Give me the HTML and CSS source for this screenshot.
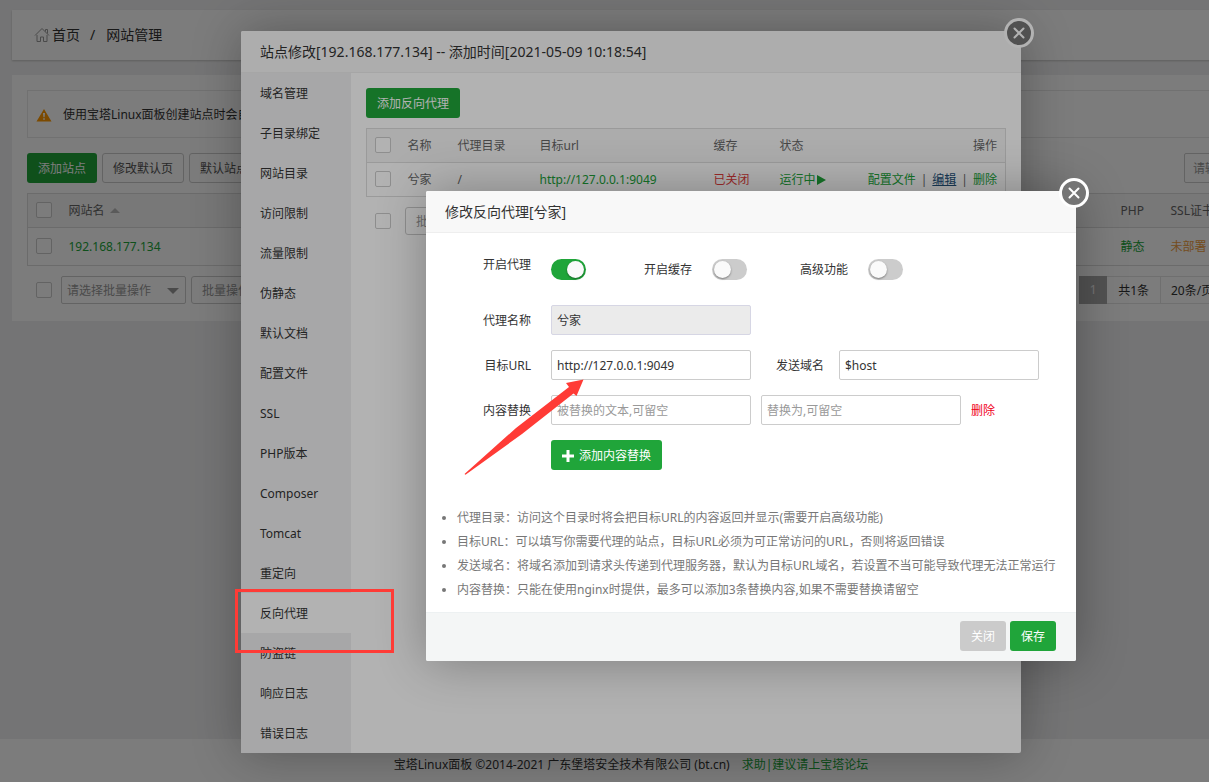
FILE: index.html
```html
<!DOCTYPE html>
<html lang="zh-CN">
<head>
<meta charset="utf-8">
<title>网站管理</title>
<link rel="stylesheet" href="styles.css">
</head>
<body>
<div class="stage">
  <div class="page">
    <main class="main">
      <nav class="card crumbs">
        <svg class="home" viewBox="0 0 16 16" width="16" height="16" fill="none" stroke="#999" stroke-width="1"><path d="M1 8.500 8 1.500l7 7M11.500 4.500V2.500h2v4M3 8v6.500h3.500V10h3v4.500H13V8"/></svg>
        <a href="#">首页</a><span class="slash">/</span><span>网站管理</span>
      </nav>
      <section class="card sites">
        <div class="alert">
          <svg viewBox="0 0 16 14" width="16" height="14"><path d="M8 1 15.500 13.500H.5z" fill="#ff9900" stroke-linejoin="round"/><path d="M7 5h2l-.4 4.200H7.400zM7.200 10.200h1.600v1.600H7.200z" fill="#fff"/></svg>
          <span>使用宝塔Linux面板创建站点时会自动创建权限配置，统一使用www用户。</span>
        </div>
        <div class="toolbar">
          <button class="btn btn-green">添加站点</button>
          <button class="btn btn-plain">修改默认页</button>
          <button class="btn btn-plain">默认站点</button>
          <input class="search" type="text" placeholder="请输入域名" aria-label="搜索">
        </div>
        <table class="grid site-grid">
          <colgroup><col class="c-check"><col><col class="c-php"><col class="c-ssl"></colgroup>
          <thead><tr><th><input type="checkbox" aria-label="全选"></th><th>网站名<i class="sort"></i></th><th>PHP</th><th>SSL证书</th></tr></thead>
          <tbody><tr><td><input type="checkbox" aria-label="选择站点"></td><td><a href="#" class="green">192.168.177.134</a></td><td><a href="#" class="green">静态</a></td><td><a href="#" class="orange">未部署</a></td></tr></tbody>
        </table>
        <div class="batch">
          <input type="checkbox" aria-label="批量选择">
          <div class="picker"><select aria-label="批量操作"><option>请选择批量操作</option></select></div>
          <button class="btn btn-batch">批量操作</button>
          <div class="pager"><b>1</b><span>共1条</span><span class="size">20条/页</span></div>
        </div>
      </section>
    </main>
    <footer class="foot">宝塔Linux面板 ©2014-2021 广东堡塔安全技术有限公司 (bt.cn)<a href="#" class="green">求助|建议请上宝塔论坛</a></footer>
  </div>

  <div class="shade"></div>

  <section class="dialog site-dialog">
    <h2 class="dialog-title">站点修改[192.168.177.134] -- 添加时间[2021-05-09 10:18:54]</h2>
    <button class="close" aria-label="关闭窗口"><svg viewBox="0 0 12 12" width="12" height="12"><path d="M1.500 1.500l9 9M10.500 1.500l-9 9" stroke="#fff" stroke-width="2" stroke-linecap="round"/></svg></button>
    <div class="split">
      <nav class="menu">
        <a href="#">域名管理</a><a href="#">子目录绑定</a><a href="#">网站目录</a><a href="#">访问限制</a><a href="#">流量限制</a><a href="#">伪静态</a><a href="#">默认文档</a><a href="#">配置文件</a><a href="#">SSL</a><a href="#">PHP版本</a><a href="#">Composer</a><a href="#">Tomcat</a><a href="#">重定向</a><a href="#" class="on">反向代理</a><a href="#">防盗链</a><a href="#">响应日志</a><a href="#">错误日志</a>
      </nav>
      <div class="pane">
        <button class="btn btn-green">添加反向代理</button>
        <table class="grid proxy-grid">
          <colgroup><col class="c-check"><col class="c-name"><col class="c-dir"><col class="c-url"><col class="c-cache"><col></colgroup>
          <thead><tr><th><input type="checkbox" aria-label="全选"></th><th>名称</th><th>代理目录</th><th>目标url</th><th>缓存</th><th><div class="ends"><span>状态</span><span>操作</span></div></th></tr></thead>
          <tbody><tr><td><input type="checkbox" aria-label="选择代理"></td><td>兮家</td><td>/</td><td><a href="#" class="green">http://127.0.0.1:9049</a></td><td><a href="#" class="red">已关闭</a></td>
          <td><div class="ends"><a href="#" class="green run">运行中<i class="play"></i></a><span class="ops"><a href="#" class="green">配置文件</a><span>|</span><a href="#" class="edit">编辑</a><span>|</span><a href="#" class="green">删除</a></span></div></td></tr></tbody>
        </table>
        <div class="batch">
          <input type="checkbox" aria-label="批量选择">
          <button class="btn btn-batch">批量删除</button>
        </div>
      </div>
    </div>
  </section>

  <div class="shade"></div>

  <section class="dialog proxy-dialog">
    <h2 class="dialog-title">修改反向代理[兮家]</h2>
    <button class="close" aria-label="关闭窗口"><svg viewBox="0 0 12 12" width="12" height="12"><path d="M1.500 1.500l9 9M10.500 1.500l-9 9" stroke="#fff" stroke-width="2" stroke-linecap="round"/></svg></button>
    <form class="form">
      <div class="row switches">
        <label class="lab raised" for="s1">开启代理</label><input class="switch" id="s1" type="checkbox" checked>
        <label class="lab mid" for="s2">开启缓存</label><input class="switch" id="s2" type="checkbox">
        <label class="lab far" for="s3">高级功能</label><input class="switch" id="s3" type="checkbox">
      </div>
      <div class="row"><label class="lab" for="f1">代理名称</label><input class="text" id="f1" type="text" value="兮家" disabled></div>
      <div class="row"><label class="lab" for="f2">目标URL</label><input class="text" id="f2" type="text" value="http://127.0.0.1:9049"><label class="lab host" for="f3">发送域名</label><input class="text" id="f3" type="text" value="$host"></div>
      <div class="row"><label class="lab" for="f4">内容替换</label><input class="text" id="f4" type="text" placeholder="被替换的文本,可留空"><input class="text next" type="text" placeholder="替换为,可留空" aria-label="替换为"><a href="#" class="del">删除</a></div>
      <div class="row"><span class="lab"></span><button type="button" class="btn btn-green btn-add"><svg viewBox="0 0 12 12" width="12" height="12"><path d="M4.500 0h3v4.500H12v3H7.500V12h-3V7.500H0v-3h4.500z" fill="#fff"/></svg>添加内容替换</button></div>
      <ul class="tips">
        <li>代理目录：访问这个目录时将会把目标URL的内容返回并显示(需要开启高级功能)</li>
        <li>目标URL：可以填写你需要代理的站点，目标URL必须为可正常访问的URL，否则将返回错误</li>
        <li>发送域名：将域名添加到请求头传递到代理服务器，默认为目标URL域名，若设置不当可能导致代理无法正常运行</li>
        <li>内容替换：只能在使用nginx时提供，最多可以添加3条替换内容,如果不需要替换请留空</li>
      </ul>
      <div class="actions"><button type="button" class="btn btn-gray">关闭</button><button type="button" class="btn btn-green">保存</button></div>
    </form>
    <svg class="arrow" viewBox="0 0 120 96" width="120" height="96"><path d="M119.500 .5 102 4l3 4L52 49 .5 95l1 .8L58 55l51.500-40.500 3 2.500z" fill="#ff3b36"/></svg>
  </section>

  <div class="mark"></div>
</div>
</body>
</html>
```

FILE: styles.css
```css
* { box-sizing: border-box; }
body {
  margin: 0;
  overflow: hidden;
  font: 12px/18px "Noto Sans", "Noto Sans CJK SC", sans-serif;
  color: #333;
}
a { color: inherit; text-decoration: none; }
button, input, select { font: inherit; color: inherit; margin: 0; }
.stage { position: relative; width: calc(100% + 53px); height: 100vh; overflow: hidden; }
.page { display: flex; flex-direction: column; height: 100%; background: #f0f0f1; }
.main { flex: 1; padding: 10px 12px; }
.card { background: #fff; }
.crumbs {
  display: flex;
  align-items: center;
  height: 50px;
  padding-left: 22px;
  font-size: 14px;
  box-shadow: 0 1px 2px rgba(0, 0, 0, .2);
}
.home { margin-right: 2px; }
.slash { padding: 0 11px 0 10px; }
.sites { margin-top: 15px; padding: 15px 15px 17px; }
.alert {
  display: flex;
  align-items: center;
  gap: 11px;
  height: 48px;
  padding: 2px 0 0 8px;
  border: 1px solid #e8e8e8;
  white-space: nowrap;
}
.toolbar { display: flex; gap: 5px; margin: 15px 0 10px; }
.btn {
  height: 30px;
  padding: 2px 11px 0;
  border: 0;
  border-radius: 3px;
  white-space: nowrap;
}
.btn-green { background: #20a53a; color: #fff; }
.btn-gray { background: #cbcbcb; color: #fff; }
.btn-plain { padding: 2px 10px 0; background: #fff; border: 1px solid #ccc; color: #555; }
.btn-batch { height: 28px; padding: 2px 10px 0; background: #fff; border: 1px solid #ccc; color: #999; }
.search {
  width: 51px;
  height: 30px;
  margin-left: auto;
  padding: 0 8px;
  border: 1px solid #ccc;
  border-radius: 2px;
}
::placeholder { color: #999; opacity: 1; }
input[type="checkbox"] {
  appearance: none;
  display: block;
  width: 16px;
  height: 16px;
  border: 1px solid #ccc;
  border-radius: 2px;
  background: #fff;
}
.grid input[type="checkbox"] { margin-bottom: 2px; }
.grid {
  width: 100%;
  table-layout: fixed;
  border-collapse: collapse;
  border: 1px solid #ddd;
  color: #666;
}
.grid th, .grid td { height: 34px; padding: 0 8px; text-align: left; font-weight: normal; white-space: nowrap; border-bottom: 1px solid #ddd; }
.grid th { background: #f6f6f6; }
.site-grid td { height: 38px; }
.c-check { width: 33px; }
.c-php { width: 50px; }
.c-ssl { width: 72px; }
.c-name { width: 50px; }
.c-dir { width: 82px; }
.c-url { width: 174px; }
.c-cache { width: 66px; }
.sort {
  display: inline-block;
  margin: 0 0 2px 5px;
  border: 5px solid transparent;
  border-top: 0;
  border-bottom-color: #bbb;
}
.green { color: #20a53a; }
.orange { color: #f0a040; }
.red { color: #e03c3c; }
.batch { display: flex; align-items: center; margin-top: 10px; padding-left: 9px; }
.picker { position: relative; margin: 0 5px 0 9px; }
.picker select {
  appearance: none;
  display: block;
  width: 125px;
  height: 28px;
  padding: 2px 5px 0;
  border: 1px solid #ccc;
  border-radius: 2px;
  background: #fff;
  color: #999;
}
.picker::after {
  content: "";
  position: absolute;
  right: 7px;
  top: 12px;
  border: 6px solid transparent;
  border-top-color: #999;
  border-bottom: 0;
}
.pager { display: flex; margin-left: auto; line-height: 26px; }
.pager b { width: 28px; border: 1px solid #aaa; background: #aaa; color: #eee; font-weight: normal; text-align: center; }
.pager span { padding: 1px 11px 0; line-height: 25px; border: 1px solid #e6e6e6; border-left: 0; }
.pager .size { width: 74px; padding: 1px 10px 0; }
.foot {
  display: flex;
  justify-content: center;
  gap: 12px;
  padding: 17px 0 8px;
  background: #fff;
}
.shade { position: absolute; inset: 0; background: rgba(0, 0, 0, .3); }

.dialog {
  position: absolute;
  background: #fff;
  border-radius: 2px;
  box-shadow: 1px 1px 50px rgba(0, 0, 0, .3);
}
.site-dialog { left: calc(50% - 390px); top: 31px; width: 780px; }
.proxy-dialog { left: calc(50% - 205px); top: 191px; width: 650px; }
.dialog-title {
  height: 42px;
  margin: 0;
  padding-left: 19px;
  border-bottom: 1px solid #eee;
  border-radius: 2px 2px 0 0;
  background: #f8f8f8;
  font-size: 14px;
  font-weight: normal;
  line-height: 42px;
}
.close {
  position: absolute;
  top: -13px;
  right: -13px;
  display: flex;
  align-items: center;
  justify-content: center;
  width: 30px;
  height: 30px;
  padding: 0;
  border: 3px solid #fff;
  border-radius: 50%;
  background: #757575;
}
.split { display: flex; }
.menu { width: 110px; background: #f0f0f1; }
.menu a { display: block; height: 40px; padding-left: 19px; line-height: 42px; }
.menu .on { background: #fff; }
.pane { flex: 1; padding: 15px; }
.proxy-grid { margin-top: 10px; }
.pane .btn { display: block; }
.pane .btn-batch { margin-left: 14px; }
.ends { display: flex; justify-content: space-between; }
.run { display: flex; align-items: center; }
.play { margin-left: 1px; border: 5px solid transparent; border-left: 9px solid #20a53a; border-right: 0; }
.ops { display: flex; gap: 5px; }
.edit { color: #23527c; text-decoration: underline; }

.form { padding-top: 21px; }
.row { display: flex; align-items: center; height: 30px; margin-bottom: 15px; }
.switches { margin-bottom: 21px; }
.lab { width: 105px; margin-right: 20px; padding-top: 2px; text-align: right; }
.raised { align-self: flex-start; }
.mid { width: 106px; }
.far { width: 101px; }
.host { width: 73px; margin-right: 15px; }
.text {
  width: 200px;
  height: 30px;
  padding: 0 5px;
  border: 1px solid #ccc;
  border-radius: 2px;
  background: #fff;
}
.text:disabled { background: #ebebeb; border-color: #d6d6e4; }
.next { margin: 0 10px; }
.del { padding-top: 2px; color: #f00020; }
.form input.switch {
  width: 35px;
  height: 21px;
  padding: 2px;
  border: 0;
  border-radius: 11px;
  background: #ccc;
}
.switch::before {
  content: "";
  display: block;
  width: 17px;
  height: 17px;
  border-radius: 50%;
  background: #fafafa;
  box-shadow: 0 1px 2px rgba(0, 0, 0, .4);
}
.form input.switch:checked { background: #20a53a; }
.switch:checked::before { margin-left: auto; }
.btn-add { display: flex; align-items: center; gap: 5px; }
.tips { margin: 36px 0 0; padding: 0 0 0 31px; color: #777; line-height: 24px; white-space: nowrap; }
.actions {
  display: flex;
  justify-content: flex-end;
  gap: 4px;
  margin-top: 10px;
  padding: 8px 20px 10px;
  border-top: 1px solid #edf1f2;
  border-radius: 0 0 2px 2px;
  background: #f4f6f6;
}
.arrow { position: absolute; left: 38px; top: 188px; }
.mark {
  position: absolute;
  left: calc(50% - 396px);
  top: 589px;
  width: 159px;
  height: 64px;
  border: 3px solid #ff3b36;
}
```
